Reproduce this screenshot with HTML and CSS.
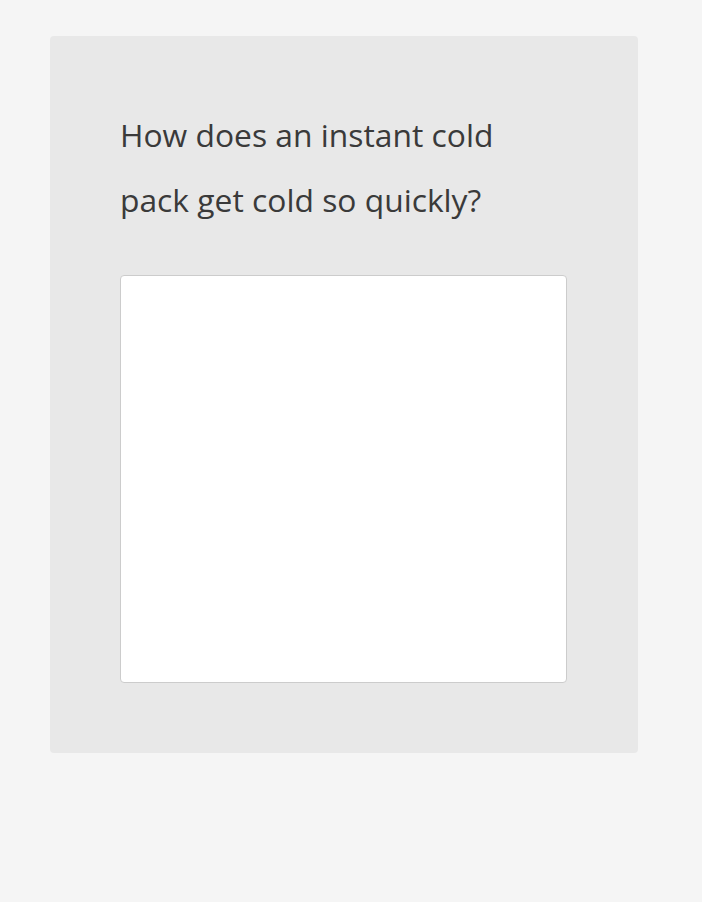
FILE: index.html
```html
<!DOCTYPE html>
<html>
<head>
<meta charset="utf-8">
<link rel="stylesheet" href="styles.css">
</head>
<body>
<div class="page">
  <div class="card">
    <p class="question">How does an instant cold pack get cold so quickly?</p>
    <textarea class="answer"></textarea>
  </div>
</div>
</body>
</html>
```
FILE: styles.css
```css
html, body {
  margin: 0;
  padding: 0;
  background: #f5f5f5;
  height: 100%;
}
.page {
  padding: 36px 0 0 50px;
}
.card {
  width: 588px;
  box-sizing: border-box;
  background: #e8e8e8;
  border-radius: 4px;
  padding: 66px 70px 70px 70px;
  display: flex;
  flex-direction: column;
}
.question {
  margin: 0 0 43px 0;
  font-family: "Open Sans", sans-serif;
  font-size: 31.8px;
  line-height: 65px;
  color: #3a3a3a;
  max-width: 400px;
}
.answer {
  width: 447px;
  height: 408px;
  box-sizing: border-box;
  border: 1px solid #cccccc;
  border-radius: 4px;
  background: #ffffff;
  resize: none;
  margin: 0;
  padding: 0;
  display: block;
}
```
